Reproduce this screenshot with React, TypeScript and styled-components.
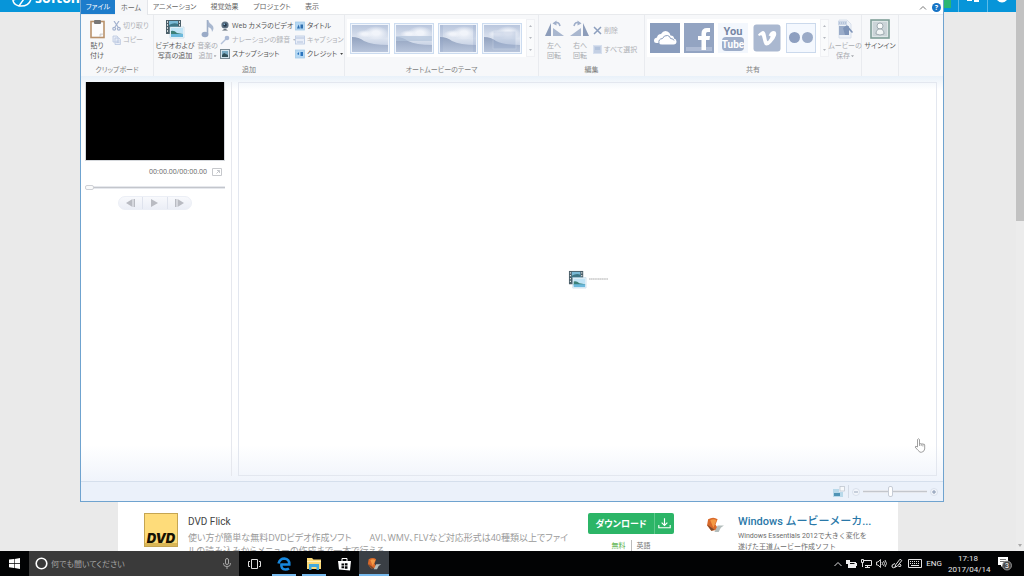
import React from 'react';
import styled, { createGlobalStyle, css } from 'styled-components';

const GlobalStyle = createGlobalStyle`
  * { box-sizing: border-box; }
  html, body { margin: 0; padding: 0; }
  body {
    overflow: hidden;
    font-family: "Open Sans", "Noto Sans CJK JP", sans-serif;
    font-feature-settings: "palt";
  }
  button, input { font: inherit; font-feature-settings: inherit; color: inherit; margin: 0; padding: 0; border: 0; background: none; }
  a { text-decoration: none; color: inherit; }
  svg { display: block; flex: none; }
  h2, p { margin: 0; font-weight: 400; }
`;

const Desktop = styled.div`
  height: 100vh;
  display: flex;
  flex-direction: column;
  background: #000;
`;

const Screen = styled.div`
  position: relative;
  flex: 1;
  min-height: 0;
  display: flex;
  overflow: hidden;
`;

/* ---------- Browser page ---------- */

const WebPage = styled.div`
  flex: 1;
  min-width: 0;
  display: flex;
  flex-direction: column;
  background: #eaeaea;
`;

const SiteHeader = styled.header`
  height: 12px;
  flex: none;
  display: flex;
  justify-content: space-between;
  background: #0795d9;
  overflow: hidden;
  color: #fff;
`;

const SiteLogo = styled.a`
  display: flex;
  align-items: flex-end;
  gap: 2px;
  padding-left: 11px;
  font: 700 14px/20px "Open Sans", sans-serif;
  height: 8px;
`;

const HeaderTools = styled.div`
  display: flex;
  height: 12px;
`;

const GreenTool = styled.span`
  width: 12px;
  height: 8px;
  background: #2bb673;
`;

const HeaderTool = styled.button`
  width: 29px;
  display: flex;
  justify-content: center;
  border-left: 1px solid #5cbbe8;
  &:first-of-type { margin-left: 7px; }
`;

const Sheet = styled.main`
  flex: 1;
  min-height: 0;
  margin: 0 118px;
  background: #fff;
  display: flex;
  align-items: flex-end;
`;

const Listing = styled.div`
  flex: 1;
  height: 38px;
  display: flex;
  padding-left: 26px;
  overflow: hidden;
`;

const ListingText = styled.div`
  width: 386px;
  margin-left: 10px;
  font-size: 9px;
  line-height: 13px;
  color: #9a9a9a;
  white-space: nowrap;
  h2 { font: 10px/18px Roboto, sans-serif; color: #444; }
`;

const DownloadBox = styled.div`
  width: 86px;
  margin-left: 16px;
  text-align: center;
`;

const DownloadButton = styled.button`
  width: 86px;
  height: 21px;
  display: flex;
  align-items: center;
  border-radius: 2px;
  background: #2cb567;
  color: #fff;
  font-size: 9px;
  font-weight: 700;
  span { flex: 1; }
  svg { border-left: 1px solid #5fc98c; width: 20px; height: 21px; }
`;

const Facts = styled.div`
  display: flex;
  justify-content: center;
  gap: 5px;
  margin-top: 6px;
  font-size: 7px;
  line-height: 12px;
  color: #777;
  b { font-weight: 400; color: #55b045; padding-right: 5px; border-right: 1px solid #bbb; }
`;

const Related = styled.div`
  display: flex;
  gap: 13px;
  margin-left: 32px;
  flex: none;
  width: 192px;
  white-space: nowrap;
  svg { margin-top: 2px; }
  p { margin-top: 1px; font: 7px/11px Roboto, "Noto Sans CJK JP", sans-serif; color: #6c6c6c; }
`;

const RelatedLink = styled.a`
  display: block;
  font: 500 11px/17px Roboto, "Noto Sans CJK JP", sans-serif;
  color: #2a78a8;
`;

const PageScroll = styled.div`
  width: 8px;
  display: flex;
  flex-direction: column;
  align-items: center;
  justify-content: space-between;
  padding-bottom: 4px;
  background: #ececec;
`;

const PageThumb = styled.div`
  width: 100%;
  height: 221px;
  background: #c2c2c2;
`;

/* ---------- Movie Maker window ---------- */

const AppWindow = styled.section`
  position: absolute;
  top: 0;
  right: 80px;
  bottom: 49px;
  left: 80px;
  display: flex;
  flex-direction: column;
  border: 1px solid #6fa3cf;
  border-top: 0;
  background: #fff;
  overflow: hidden;
`;

const TabRow = styled.nav`
  height: 15px;
  flex: none;
  display: flex;
  border-bottom: 1px solid #e8eaed;
`;

const Tab = styled.button<{ $w: number; $kind?: 'file' | 'active' }>`
  width: ${p => p.$w}px;
  height: 14px;
  font-size: 7px;
  line-height: 14px;
  color: #666;
  white-space: nowrap;
  ${p => p.$kind === 'file' && css`background: #1d7ccb; color: #fff;`}
  ${p => p.$kind === 'active' && css`height: 15px; background: #f6f7f9; border-right: 1px solid #e4e6ea;`}
`;

const TabTools = styled.div`
  margin-left: auto;
  display: flex;
  align-items: center;
  gap: 5px;
  padding-right: 2px;
`;

const Ribbon = styled.div`
  height: 61px;
  flex: none;
  display: flex;
  background: #f7f8fa;
`;

const Group = styled.div<{ $w: number }>`
  width: ${p => p.$w}px;
  flex: none;
  display: flex;
  flex-direction: column;
  padding-top: 4px;
  border-right: 1px solid #e9ebef;
`;

const GroupBody = styled.div<{ $pad?: number; $gap?: number }>`
  height: 45px;
  display: flex;
  align-items: flex-start;
  gap: ${p => p.$gap ?? 0}px;
  padding-left: ${p => p.$pad ?? 0}px;
`;

const GroupLabel = styled.div`
  text-align: center;
  font-size: 7px;
  line-height: 12px;
  color: #808080;
  white-space: nowrap;
`;

const BigButton = styled.button<{ $w: number; $dim?: boolean }>`
  width: ${p => p.$w}px;
  flex: none;
  display: flex;
  flex-direction: column;
  align-items: center;
  font-size: 7px;
  line-height: 10px;
  color: ${p => (p.$dim ? '#a9abb0' : '#5c5c5c')};
  white-space: nowrap;
  svg { margin-bottom: 2px; }
`;

const Stack = styled.div<{ $w: number; $tall?: boolean }>`
  width: ${p => p.$w}px;
  flex: none;
  display: flex;
  flex-direction: column;
  padding-top: ${p => (p.$tall ? 2 : 0)}px;
  button { height: ${p => (p.$tall ? 19 : 14)}px; }
`;

const SmallButton = styled.button<{ $dim?: boolean }>`
  display: flex;
  align-items: center;
  gap: 2px;
  font-size: 7px;
  line-height: 14px;
  color: ${p => (p.$dim ? '#b0b2b7' : '#555')};
  white-space: nowrap;
`;

const Caret = styled.i<{ $dim?: boolean }>`
  display: inline-block;
  width: 3px;
  height: 2px;
  margin-left: 1px;
  vertical-align: middle;
  background: ${p => (p.$dim ? '#a9abb0' : '#444')};
  clip-path: polygon(0 0, 100% 0, 50% 100%);
`;

const Gallery = styled.div<{ $gap: number }>`
  height: 38px;
  display: flex;
  align-items: center;
  gap: ${p => p.$gap}px;
  padding-left: 3px;
  background: #fff;
  button { display: block; }
`;

const GalleryScroll = styled.div`
  align-self: stretch;
  width: 9px;
  display: flex;
  flex-direction: column;
  justify-content: space-around;
  align-items: center;
  border: 1px solid #f0f1f4;
  background: #fafbfc;
`;

const Work = styled.div`
  flex: 1;
  min-height: 0;
  display: flex;
  padding: 6px 6px 5px 4px;
  background:
    linear-gradient(#e9f1f9, rgba(255, 255, 255, 0)) top / 100% 14px no-repeat,
    linear-gradient(rgba(255, 255, 255, 0), #f0f4fb) bottom / 100% 36px no-repeat,
    #fff;
`;

const Preview = styled.div`
  width: 147px;
  flex: none;
  padding-right: 6px;
  border-right: 1px solid #e6e8ee;
`;

const Monitor = styled.div`
  height: 79px;
  background: #000;
  border: 1px solid #d5d8dc;
  border-width: 0 1px 1px 1px;
`;

const TimeRow = styled.div`
  display: flex;
  justify-content: flex-end;
  align-items: center;
  gap: 5px;
  height: 21px;
  padding-right: 3px;
  font-size: 7px;
  line-height: 12px;
  color: #666;
`;

const rangeTrack = css`
  appearance: none;
  display: block;
  height: 8px;
  background: linear-gradient(#c3c6cc, #c3c6cc) center / 100% 1px no-repeat,
    linear-gradient(#e6e8ed, #e6e8ed) center / 100% 3px no-repeat;
`;

const SeekBar = styled.input`
  ${rangeTrack}
  width: 100%;
  margin-top: 1px;
  &::-webkit-slider-thumb {
    appearance: none;
    width: 9px;
    height: 5px;
    border: 1px solid #cfd1d6;
    border-radius: 2px;
    background: #fafafa;
  }
`;

const Transport = styled.div`
  width: 74px;
  height: 14px;
  margin: 5px auto 0 33px;
  display: flex;
  border-radius: 7px;
  background: linear-gradient(#f8f9fc, #ebeef6);
  border: 1px solid #eceff6;
  button { flex: 1; display: flex; align-items: center; justify-content: center; }
  button + button { border-left: 1px solid #dfe3ed; }
`;

const Storyboard = styled.div`
  flex: 1;
  margin-left: 6px;
  display: flex;
  align-items: center;
  justify-content: center;
  gap: 2px;
  border: 1px solid #e3e7ef;
`;

const StatusBar = styled.footer`
  height: 20px;
  flex: none;
  display: flex;
  align-items: center;
  justify-content: flex-end;
  gap: 3px;
  padding-right: 5px;
  border-top: 1px solid #d5dfec;
  background: #ebf1fa;
`;

const StatusRule = styled.span`
  width: 1px;
  height: 13px;
  background: #d3dae5;
`;

const RoundButton = styled.button`
  width: 8px;
  height: 8px;
  display: grid;
  place-items: center;
  border-radius: 50%;
  border: 1px solid #d9e0ec;
  background: #f3f6fb;
`;

const ZoomBar = styled.input`
  ${rangeTrack}
  width: 64px;
  height: 11px;
  &::-webkit-slider-thumb {
    appearance: none;
    width: 5px;
    height: 11px;
    border: 1px solid #c6ccd6;
    border-radius: 2px;
    background: #fff;
  }
`;

const Pointer = styled.svg`
  position: absolute;
  right: 98px;
  bottom: 98px;
`;

/* ---------- Taskbar ---------- */

const Taskbar = styled.div`
  height: 25px;
  flex: none;
  display: flex;
  background: #020304;
  color: #e8e8e8;
`;

const TaskButton = styled.button<{ $w?: number; $state?: 'open' | 'active' }>`
  width: ${p => p.$w ?? 30}px;
  display: flex;
  align-items: center;
  justify-content: center;
  ${p => p.$state && css`
    background: linear-gradient(#76b9ed, #76b9ed) bottom / ${p.$state === 'active' ? '100%' : '24px'} 2px no-repeat;
  `}
  ${p => p.$state === 'active' && css`background-color: #3a3f45;`}
`;

const Search = styled.label`
  width: 210px;
  display: flex;
  align-items: center;
  gap: 3px;
  padding: 0 8px 0 6px;
  background: #3a3a3a;
  input { flex: 1; min-width: 0; font-size: 8px; line-height: 14px; outline: 0; }
  input::placeholder { color: #a5a5a5; opacity: 1; }
`;

const Tray = styled.div`
  margin-left: auto;
  display: flex;
  align-items: center;
  gap: 4px;
  padding-right: 12px;
  font: 8px/11px Roboto, sans-serif;
`;

const Clock = styled.div`
  width: 40px;
  margin: 0 6px 0 2px;
  text-align: center;
`;

/* ---------- Drawings ---------- */

const Landscape = ({ variant }: { variant: number }) => (
  <svg width="40" height="31" viewBox="0 0 40 31">
    <defs>
      <linearGradient id={`sky${variant}`} x1="0" y1="0" x2="0" y2="1">
        <stop offset="0" stopColor="#b9c6dd" />
        <stop offset="0.5" stopColor="#dde4f0" />
        <stop offset="1" stopColor="#b4c2da" />
      </linearGradient>
      <radialGradient id={`cloud${variant}`}>
        <stop offset="0.3" stopColor="#f1f4fa" />
        <stop offset="1" stopColor="#f1f4fa" stopOpacity="0" />
      </radialGradient>
      <linearGradient id={`hill${variant}`} x1="0" y1="0" x2="0" y2="1">
        <stop offset="0" stopColor="#8496b6" />
        <stop offset="1" stopColor="#b9c6dc" />
      </linearGradient>
    </defs>
    <rect x="0.5" y="0.5" width="39" height="30" fill="#f2f6fc" stroke="#ccdcf0" />
    <rect x="2" y="2" width="36" height="27" fill={`url(#sky${variant})`} />
    <ellipse cx="26" cy="10" rx="12" ry="7" fill={`url(#cloud${variant})`} />
    <ellipse cx="15" cy="11" rx="9" ry="4" fill={`url(#cloud${variant})`} />
    <path d="M2 14q7 0 12 4q8 4 24 4v7H2z" fill={`url(#hill${variant})`} opacity=".85" />
    {variant === 1 && <path d="M2 13h36v5H2z" fill="#b4c4dc" opacity=".7" />}
    {variant === 2 && <path d="M2 2h3v27H2zM35 2h3v27h-3z" fill="#91a4c6" opacity=".25" />}
    {variant === 3 && <path d="M11 8h23v18H11z" fill="#8fa5ca" opacity=".25" stroke="#dfe7f3" />}
  </svg>
);

const MediaIcon = ({ size = 20 }: { size?: number }) => (
  <svg width={size} height={size} viewBox="0 0 20 20">
    <path d="M1 1h15v14H1z" fill="#4b5f69" />
    <path d="M4 2h9v6H4z" fill="#79b9d6" />
    <path d="M4 6q5-3 9-1v3H4z" fill="#3d7585" />
    <path d="M2 3h1M2 6h1M2 9h1M2 12h1M14 3h1M14 6h1" stroke="#fff" strokeWidth="1.4" />
    <path d="M5 8h14v11H5z" fill="#f4f9fc" stroke="#b5d3e6" strokeWidth=".6" />
    <path d="M6 9h12v9H6z" fill="#c0e4f6" />
    <path d="M6 12q3-1 6 2l6 1v1H6z" fill="#3b8078" />
    <path d="M6 15h12v3H6z" fill="#6cb9dc" />
  </svg>
);

const PasteIcon = () => (
  <svg width="17" height="20" viewBox="0 0 17 20">
    <rect x="2" y="2.5" width="13" height="16" fill="#fcfcfd" stroke="#b8916b" strokeWidth="1.6" />
    <rect x="5" y="1" width="7" height="4" rx="1" fill="#777" />
    <path d="M11 18v-3h3" fill="#e8e8ea" stroke="#bbb" strokeWidth=".6" />
  </svg>
);

const NoteIcon = () => (
  <svg width="14" height="20" viewBox="0 0 14 20">
    <path d="M6.5 1v14" stroke="#9faec7" strokeWidth="1.6" />
    <path d="M7 1q1 3 4 5q3 3 0 7q0-4-4-5z" fill="#a9b8d0" />
    <ellipse cx="4" cy="15.5" rx="3.4" ry="2.8" fill="#9aabc7" />
  </svg>
);

const CutIcon = () => (
  <svg width="9" height="10" viewBox="0 0 9 10" fill="none" stroke="#a3b2cf" strokeWidth="1.2">
    <path d="M2 0l4 6M7 0L3 6" /><circle cx="2.2" cy="7.8" r="1.4" /><circle cx="6.8" cy="7.8" r="1.4" />
  </svg>
);

const CopyIcon = () => (
  <svg width="9" height="10" viewBox="0 0 9 10" fill="#e8edf7" stroke="#b9c7df" strokeWidth=".8">
    <path d="M1 1h4l1 1v5H1zM3 3h4l1.400 1.500v5H3z" /><path d="M4.500 6h3M4.500 7.500h3" />
  </svg>
);

const WebcamIcon = () => (
  <svg width="10" height="10" viewBox="0 0 10 10">
    <circle cx="5" cy="4" r="3.600" fill="#5c6f80" /><circle cx="5" cy="4" r="1.800" fill="#23394e" />
    <circle cx="4.300" cy="3.300" r=".8" fill="#9fd0ee" /><path d="M2 9.500q3-3 6 0z" fill="#54616c" />
  </svg>
);

const MicIcon = () => (
  <svg width="10" height="10" viewBox="0 0 10 10">
    <path d="M1 9l5-5" stroke="#b4c1d9" strokeWidth="1.500" /><circle cx="7" cy="3" r="2.300" fill="#a9b8d4" />
  </svg>
);

const SnapshotIcon = () => (
  <svg width="10" height="10" viewBox="0 0 10 10">
    <rect x=".5" y=".5" width="9" height="9" fill="#d3e4ee" stroke="#7b8b95" />
    <path d="M2 2h6v4H2z" fill="#78a9c2" /><path d="M2 6l2-2l4 2v2H2z" fill="#33525c" />
  </svg>
);

const TextCardIcon = ({ kind }: { kind: 'title' | 'caption' | 'credit' }) => (
  <svg width="10" height="10" viewBox="0 0 10 10">
    <rect x=".5" y="1" width="9" height="8" fill={kind === 'caption' ? '#e9eef8' : '#b5d8f3'} stroke={kind === 'caption' ? '#b8c8e2' : '#a5cbe8'} strokeWidth=".8" />
    {kind === 'title' && <path d="M2 7.500l1.500-4l1.500 4zM5.500 7.500v-4h2.500v4z" fill="#2e6eae" />}
    {kind === 'caption' && <path d="M2 7h6M1 3h8" stroke="#b3c2dc" />}
    {kind === 'credit' && <path d="M2 5l2-2v3zM5.500 3h2.500v4H5.500z" fill="#2a74be" />}
  </svg>
);

const RotateIcon = ({ flip }: { flip?: boolean }) => (
  <svg width="20" height="20" viewBox="0 0 20 20">
    <g transform={flip ? 'translate(20 0) scale(-1 1)' : undefined}>
      <path d="M1 17L7 4v13z" fill="#8d9dba" /><path d="M9 17V9l11 8z" fill="#a9b7cf" />
      <path d="M10 4q5-2 6 3" fill="none" stroke="#a0afca" strokeWidth="1.600" /><path d="M8.500 4.500l4-3v5z" fill="#a0afca" />
    </g>
  </svg>
);

const DeleteIcon = () => (
  <svg width="9" height="9" viewBox="0 0 9 9" stroke="#8d9fbe" strokeWidth="1.500"><path d="M1 1l7 7M8 1L1 8" /></svg>
);

const SelectAllIcon = () => (
  <svg width="9" height="9" viewBox="0 0 9 9"><rect x=".5" y=".5" width="8" height="8" fill="#c4d0e4" stroke="#d7e0ef" /><path d="M2 2h5v3H2z" fill="#b3c3dc" /></svg>
);

const ShareIcon = ({ name }: { name: string }) => (
  <svg width="30" height="30" viewBox="0 0 30 30">
    {name === 'OneDrive' && <>
      <rect width="30" height="30" fill="#8a9dbd" />
      <path d="M6.500 20Q4 20 4 17.500Q4 15 7 14.500Q7.500 11 11 11Q13.500 7 17.500 8.500Q20 9.500 20.500 12.500Q24 12.500 24 15.500Q26.500 16 26.500 18.500Q26.500 21.500 23.500 21.500H12Q9.500 21.500 9 20z" fill="#fff" />
      <path d="M9 20.500Q8 16 12.500 15.500Q14 12 17.500 12.500Q20 13 20.500 15.500Q23.500 15.500 24 17.500" fill="none" stroke="#8a9dbd" />
    </>}
    {name === 'Facebook' && <>
      <rect width="30" height="30" fill="#93a4c2" /><path d="M2 24h26v4H2z" fill="#aebbd4" />
      <path d="M17.500 27V17H14v-4h3.500v-2.500Q17.500 5 23 5h3v4h-2.500Q22 9 22 10.500V13h4l-.5 4H22v10z" fill="#fff" />
    </>}
    {name === 'YouTube' && <>
      <rect width="30" height="30" fill="#f3f7fd" /><rect x="4" y="14" width="22" height="14" rx="4" fill="#9dadc9" />
      <text x="15" y="12" textAnchor="middle" fontFamily="Liberation Sans Narrow, Roboto, sans-serif" fontSize="11" fontWeight="700" fill="#7485a3">You</text>
      <text x="15" y="25" textAnchor="middle" fontFamily="Liberation Sans Narrow, Roboto, sans-serif" fontSize="10" fontWeight="700" fill="#fff">Tube</text>
    </>}
    {name === 'Vimeo' && <>
      <rect x="1.500" y="1.500" width="27" height="27" rx="3" fill="#aab8d0" />
      <path d="M6 11.500Q9.500 8 11 8Q13 8 13.700 11.500L14.800 17Q15.300 19 16.500 17.500Q18.500 15 18.500 13.500Q18.500 12.500 16.700 13Q18 8 22 8Q25 8.300 24 12.500Q23 16 19 20Q16.500 22.500 14.500 22.500Q12.500 22.500 11.700 19.500L10 13Q9.500 11.500 7 13z" fill="#fff" />
    </>}
    {name === 'Flickr' && <>
      <rect x=".5" y=".5" width="29" height="29" fill="#f4f8fe" stroke="#cbd9ec" />
      <circle cx="8.500" cy="14.500" r="5.500" fill="#8d9fc0" /><circle cx="21.500" cy="14.500" r="5.500" fill="#9aaac7" />
    </>}
  </svg>
);

const SaveMovieIcon = () => (
  <svg width="18" height="20" viewBox="0 0 18 20">
    <path d="M3 1h8l4 4v14H3z" fill="#eef2f8" stroke="#d2dbe9" strokeWidth=".8" />
    <path d="M2 2h9v4H2z" fill="#ccd7e7" /><path d="M3 7h10v9H3z" fill="#9aacc9" />
    <path d="M7 9l4-3l6 7l-1 1l-3-3v5H9z" fill="#7e94b8" /><path d="M3 4h8" stroke="#9fb0cc" strokeDasharray="1 1" />
  </svg>
);

const UserIcon = () => (
  <svg width="20" height="20" viewBox="0 0 20 20">
    <rect x="1" y="1" width="18" height="18" fill="#dfe7e8" stroke="#7f9f98" strokeWidth="1.600" />
    <path d="M3 3h14v14H3z" fill="#cbd4d8" /><circle cx="10" cy="7" r="3" fill="#f8fafa" stroke="#84929a" strokeWidth=".7" />
    <path d="M6 15q0-5 4-5t4 5q-4 2-8 0z" fill="#f1f5f5" stroke="#84929a" strokeWidth=".7" />
  </svg>
);

const CraneIcon = ({ size }: { size: number }) => (
  <svg width={size} height={size} viewBox="0 0 18 18">
    <path d="M2 4q5-3 9 0l-2 5l3 5l-7 1l-4-5z" fill="#d9692a" /><path d="M4 5q3-2 6 0l-3 7z" fill="#f39a45" />
    <path d="M1 9l4 6l3-1z" fill="#7d4a2b" /><path d="M9 14l2-4l6 0l-3 2l-2 4l-4 0z" fill="#b3bdbc" />
  </svg>
);

const ScrollMarks = () => (
  <GalleryScroll>
    {[0, 1, 2].map(i => (
      <svg key={i} width="3" height="2" viewBox="0 0 3 2"><path d={i === 0 ? 'M0 2L1.500 0L3 2z' : 'M0 0h3L1.500 2z'} fill="#b6b9c0" /></svg>
    ))}
  </GalleryScroll>
);

const tabs: { label: string; w: number; kind?: 'file' | 'active' }[] = [
  { label: 'ファイル', w: 34, kind: 'file' },
  { label: 'ホーム', w: 33, kind: 'active' },
  { label: 'アニメーション', w: 53 },
  { label: '視覚効果', w: 47 },
  { label: 'プロジェクト', w: 48 },
  { label: '表示', w: 32 },
];

const RibbonBar = () => (
  <Ribbon>
    <Group $w={73}>
      <GroupBody $pad={5} $gap={4}>
        <BigButton $w={22}><PasteIcon /><span>貼り</span><span>付け</span></BigButton>
        <Stack $w={40}>
          <SmallButton $dim><CutIcon />切り取り</SmallButton>
          <SmallButton $dim><CopyIcon />コピー</SmallButton>
        </Stack>
      </GroupBody>
      <GroupLabel>クリップボード</GroupLabel>
    </Group>
    <Group $w={191}>
      <GroupBody $pad={1}>
        <BigButton $w={40}><MediaIcon /><span>ビデオおよび</span><span>写真の追加</span></BigButton>
        <BigButton $w={25} $dim><NoteIcon /><span>音楽の</span><span>追加<Caret $dim /></span></BigButton>
        <Stack $w={75}>
          <SmallButton><WebcamIcon />Web カメラのビデオ</SmallButton>
          <SmallButton $dim><MicIcon />ナレーションの録音<Caret $dim /></SmallButton>
          <SmallButton><SnapshotIcon />スナップショット</SmallButton>
        </Stack>
        <Stack $w={48}>
          <SmallButton><TextCardIcon kind="title" />タイトル</SmallButton>
          <SmallButton $dim><TextCardIcon kind="caption" />キャプション</SmallButton>
          <SmallButton><TextCardIcon kind="credit" />クレジット<Caret /></SmallButton>
        </Stack>
      </GroupBody>
      <GroupLabel>追加</GroupLabel>
    </Group>
    <Group $w={194}>
      <GroupBody $pad={2}>
        <Gallery $gap={4}>
          {[0, 1, 2, 3].map(i => <button key={i} aria-label={`テーマ ${i + 1}`}><Landscape variant={i} /></button>)}
          <ScrollMarks />
        </Gallery>
      </GroupBody>
      <GroupLabel>オートムービーのテーマ</GroupLabel>
    </Group>
    <Group $w={106}>
      <GroupBody $pad={2}>
        <BigButton $w={26} $dim><RotateIcon /><span>左へ</span><span>回転</span></BigButton>
        <BigButton $w={26} $dim><RotateIcon flip /><span>右へ</span><span>回転</span></BigButton>
        <Stack $w={48} $tall>
          <SmallButton $dim><DeleteIcon />削除</SmallButton>
          <SmallButton $dim><SelectAllIcon />すべて選択</SmallButton>
        </Stack>
      </GroupBody>
      <GroupLabel>編集</GroupLabel>
    </Group>
    <Group $w={217}>
      <GroupBody $pad={2}>
        <Gallery $gap={4}>
          {['OneDrive', 'Facebook', 'YouTube', 'Vimeo', 'Flickr'].map(n => <button key={n} aria-label={n}><ShareIcon name={n} /></button>)}
          <ScrollMarks />
        </Gallery>
        <BigButton $w={32} $dim><SaveMovieIcon /><span>ムービーの</span><span>保存<Caret $dim /></span></BigButton>
      </GroupBody>
      <GroupLabel>共有</GroupLabel>
    </Group>
    <Group $w={37}>
      <GroupBody $pad={1}>
        <BigButton $w={34}><UserIcon /><span>サインイン</span></BigButton>
      </GroupBody>
    </Group>
  </Ribbon>
);

export default function App() {
  return (
    <Desktop lang="ja">
      <GlobalStyle />
      <Screen>
        <WebPage>
          <SiteHeader>
            <SiteLogo href="#">
              <svg width="22" height="20" viewBox="0 0 22 20" fill="none" stroke="#fff" strokeWidth="1.500">
                <path d="M2 10q-1 6 6 8l7-10M8 18q10 1 12-7l-1-3M2 12l7-2" />
              </svg>
              <span>softonic</span>
            </SiteLogo>
            <HeaderTools>
              <GreenTool />
              <HeaderTool aria-label="言語">
                <svg width="12" height="3" viewBox="0 0 12 3" fill="#fff"><path d="M0 0h5v1H0zM7 0h5v2H7z" /></svg>
              </HeaderTool>
              <HeaderTool aria-label="アカウント">
                <svg width="10" height="3" viewBox="0 0 10 3" fill="#fff"><path d="M0 0h10q-5 5-10 0z" /></svg>
              </HeaderTool>
            </HeaderTools>
          </SiteHeader>
          <Sheet>
            <Listing>
              <svg width="34" height="35" viewBox="0 0 34 35">
                <rect x=".5" y=".5" width="33" height="33" fill="#fedc7a" stroke="#c5a552" />
                <path d="M1 30h32v3H1z" fill="#d9b656" />
                <text x="17" y="30" textAnchor="middle" fontFamily="Inter, sans-serif" fontSize="13" fontWeight="900" fontStyle="italic" fill="#171204">DVD</text>
              </svg>
              <ListingText>
                <h2>DVD Flick</h2>
                <p>使い方が簡単な無料DVDビデオ作成ソフト　　AVI、WMV、FLVなど対応形式は40種類以上でファイ<br />ルの読み込みからメニューの作成まで一本で行える</p>
              </ListingText>
              <DownloadBox>
                <DownloadButton>
                  <span>ダウンロード</span>
                  <svg viewBox="0 0 20 21" fill="none" stroke="#fff" strokeWidth="1.200"><path d="M10 5v7M7 9.500l3 3l3-3M4 12v3h12v-3" /></svg>
                </DownloadButton>
                <Facts><b>無料</b><span>英語</span></Facts>
              </DownloadBox>
              <Related>
                <CraneIcon size={19} />
                <div>
                  <RelatedLink href="#">Windows ムービーメーカ...</RelatedLink>
                  <p>Windows Essentials 2012で大きく変化を<br />遂げた王道ムービー作成ソフト</p>
                </div>
              </Related>
            </Listing>
          </Sheet>
        </WebPage>
        <PageScroll>
          <PageThumb />
          <svg width="4" height="3" viewBox="0 0 4 3"><path d="M0 0h4L2 3z" fill="#aaa" /></svg>
        </PageScroll>

        <AppWindow>
          <TabRow>
            {tabs.map(t => <Tab key={t.label} $w={t.w} $kind={t.kind}>{t.label}</Tab>)}
            <TabTools>
              <svg width="8" height="5" viewBox="0 0 8 5" fill="none" stroke="#777"><path d="M1 4.500l3-3l3 3" /></svg>
              <svg width="9" height="9" viewBox="0 0 9 9">
                <circle cx="4.500" cy="4.500" r="4.500" fill="#1673c5" />
                <text x="4.500" y="7" textAnchor="middle" fontSize="7" fontWeight="700" fill="#fff">?</text>
              </svg>
            </TabTools>
          </TabRow>
          <RibbonBar />
          <Work>
            <Preview>
              <Monitor />
              <TimeRow>
                <span>00:00.00/00:00.00</span>
                <svg width="10" height="8" viewBox="0 0 10 8" fill="none" stroke="#c6c8cc"><path d="M.5.5h9v7h-9zM4.500 5.500l3-3M5 2.500h2.500V5" /></svg>
              </TimeRow>
              <SeekBar type="range" min={0} max={100} defaultValue={0} aria-label="再生位置" />
              <Transport>
                <button aria-label="前のフレーム"><svg width="10" height="8" viewBox="0 0 10 8" fill="#b9bbc2"><path d="M6.500 0v8L0 4zM7.500 0h1.500v8H7.500z" /></svg></button>
                <button aria-label="再生"><svg width="7" height="8" viewBox="0 0 7 8" fill="#b9bbc2"><path d="M0 0l7 4l-7 4z" /></svg></button>
                <button aria-label="次のフレーム"><svg width="10" height="8" viewBox="0 0 10 8" fill="#b9bbc2"><path d="M3.500 0v8L10 4zM1 0h1.500v8H1z" /></svg></button>
              </Transport>
            </Preview>
            <Storyboard>
              <MediaIcon size={19} />
              <svg width="19" height="2" viewBox="0 0 19 2"><path d="M0 1h19" stroke="#999" strokeWidth=".8" strokeDasharray="1.500 .3" /></svg>
            </Storyboard>
          </Work>
          <StatusBar>
            <svg width="12" height="11" viewBox="0 0 12 11">
              <rect x="7" y=".5" width="4.500" height="4.500" fill="#f7f9fb" stroke="#b9c0c9" strokeWidth=".7" />
              <path d="M0 3h6v3h4v5H0z" fill="#b9d9ea" /><path d="M1 7h6v3H1z" fill="#4f93b5" />
            </svg>
            <StatusRule />
            <RoundButton aria-label="縮小"><svg width="4" height="4" stroke="#9aa7bb"><path d="M0 2h4" /></svg></RoundButton>
            <ZoomBar type="range" min={0} max={100} defaultValue={42} aria-label="ズーム" />
            <RoundButton aria-label="拡大"><svg width="4" height="4" stroke="#8495b0"><path d="M0 2h4M2 0v4" /></svg></RoundButton>
          </StatusBar>
        </AppWindow>

        <Pointer width="12" height="15" viewBox="0 0 12 15">
          <path d="M3.500 9V1.500q1-1.500 2 0V6q1-1 1.700 0q1-1 1.700.3q1.500-.8 1.800.7v4q-.7 3-3 3.200H6Q4.500 13 1 9q.5-1.500 2.500 0z" fill="#fff" stroke="#888" strokeWidth=".8" />
          <path d="M5.500 6v2M7.200 6v2M8.900 6.500v2" stroke="#888" strokeWidth=".7" />
        </Pointer>
      </Screen>

      <Taskbar>
        <TaskButton $w={29} aria-label="スタート">
          <svg width="11" height="11" viewBox="0 0 11 11" fill="#fff"><path d="M0 1.500L5 1v4H0zM5.600.9L11 0v5H5.600zM0 5.700h5v4.200l-5-.6zM5.600 5.700H11V11l-5.400-.9z" /></svg>
        </TaskButton>
        <Search>
          <svg width="13" height="13" viewBox="0 0 13 13"><circle cx="6.500" cy="6.500" r="5.300" fill="none" stroke="#fff" strokeWidth="1.600" /></svg>
          <input type="text" placeholder="何でも聞いてください" aria-label="検索" />
          <svg width="8" height="11" viewBox="0 0 8 11" fill="none" stroke="#a8a8a8"><rect x="2.500" y=".5" width="3" height="6" rx="1.500" /><path d="M.7 5v1.500q0 2 3.300 2t3.300-2V5M4 8.500V11" /></svg>
        </Search>
        <TaskButton aria-label="タスク ビュー">
          <svg width="13" height="10" viewBox="0 0 13 10" fill="none" stroke="#ddd"><path d="M3.500.5h6v9h-6zM2 2.500H.5v5H2M11 2.500h1.500v5H11" /></svg>
        </TaskButton>
        <TaskButton $state="open" aria-label="Edge">
          <svg width="14" height="14" viewBox="0 0 14 14" fill="none" stroke="#1787dd" strokeWidth="2.600">
            <path d="M1.500 6.500Q3 1.500 7.500 1.500Q12.500 2 12.300 7.500H4.500M4.500 6.500q-1 6 4 6q2 0 3.500-1" />
          </svg>
        </TaskButton>
        <TaskButton $state="open" aria-label="エクスプローラー">
          <svg width="14" height="12" viewBox="0 0 14 12"><path d="M0 0h5l1.500 1.500H14V11H0z" fill="#fbd978" /><path d="M2 6h10v6h-2.500V9h-5v3H2z" fill="#43a9dd" /><path d="M0 3h14v1H0z" fill="#fff0b8" /></svg>
        </TaskButton>
        <TaskButton aria-label="ストア">
          <svg width="13" height="14" viewBox="0 0 13 14"><path d="M0 4h13l-1 9.500L1 12.500z" fill="#fff" /><path d="M4 4V1.500h5V4" fill="none" stroke="#fff" /><path d="M3.500 6.500h2.500v2H3.500zM6.800 6.300h2.700v2.200H6.800zM3.500 9.300h2.500v2H3.500zM6.800 9.300h2.700v2.400H6.800z" fill="#020304" /></svg>
        </TaskButton>
        <TaskButton $state="active" aria-label="ムービー メーカー"><CraneIcon size={15} /></TaskButton>
        <Tray>
          <svg width="8" height="6" viewBox="0 0 8 6" fill="none" stroke="#ddd"><path d="M.5 5L4 1.500L7.500 5" /></svg>
          <svg width="11" height="8" viewBox="0 0 11 8" fill="#eee"><path d="M0 0h4v2h6v1h1v3h-1v2H2V4H0z" /><path d="M4 3.500h4.500" stroke="#020304" /></svg>
          <svg width="11" height="9" viewBox="0 0 11 9" fill="none" stroke="#e4e4e4"><path d="M3 1.500h7.500v5H4M6.500 6.500v2M4 8.500h5M.5.500h2v3h-2zM1.500 3.500V8" /></svg>
          <svg width="11" height="9" viewBox="0 0 11 9" fill="none" stroke="#e4e4e4" strokeWidth=".9"><path d="M.5 3H2l2.500-2.500v8L2 6H.5zM6 3q1 1.500 0 3M7.500 2q2 2.500 0 5M9 1q3 3.500 0 7" /></svg>
          <svg width="13" height="11" viewBox="0 0 13 11" fill="none" stroke="#e4e4e4">
            <path d="M4.500 7L9 1.200l1.800 1.300L6.500 8L4.200 9z" /><path d="M4 5.500q-4 1-3 3.500q1 1.500 3.500 0M7.500 8.500q3 .5 2.500-1.500q-1-1.500-1.500 0" />
          </svg>
          <svg width="14" height="9" viewBox="0 0 14 9" fill="none" stroke="#e4e4e4"><path d="M.5.500h13v8H.5z" /><path d="M2 2.500h10M2 4.500h10" strokeDasharray="1 1" /><path d="M3 6.500h8" /></svg>
          <span>ENG</span>
          <Clock>17:18<br />2017/04/14</Clock>
          <svg width="14" height="15" viewBox="0 0 14 15">
            <path d="M0 1h10v8H5l-2 2V9H0z" fill="#fff" /><path d="M2 3.500h6M2 5.500h6" stroke="#555" strokeWidth=".8" />
            <circle cx="9" cy="9.500" r="4.500" fill="#4a4a4a" stroke="#aaa" strokeWidth=".8" />
            <text x="9" y="12" textAnchor="middle" fontSize="7" fill="#fff">3</text>
          </svg>
        </Tray>
      </Taskbar>
    </Desktop>
  );
}
